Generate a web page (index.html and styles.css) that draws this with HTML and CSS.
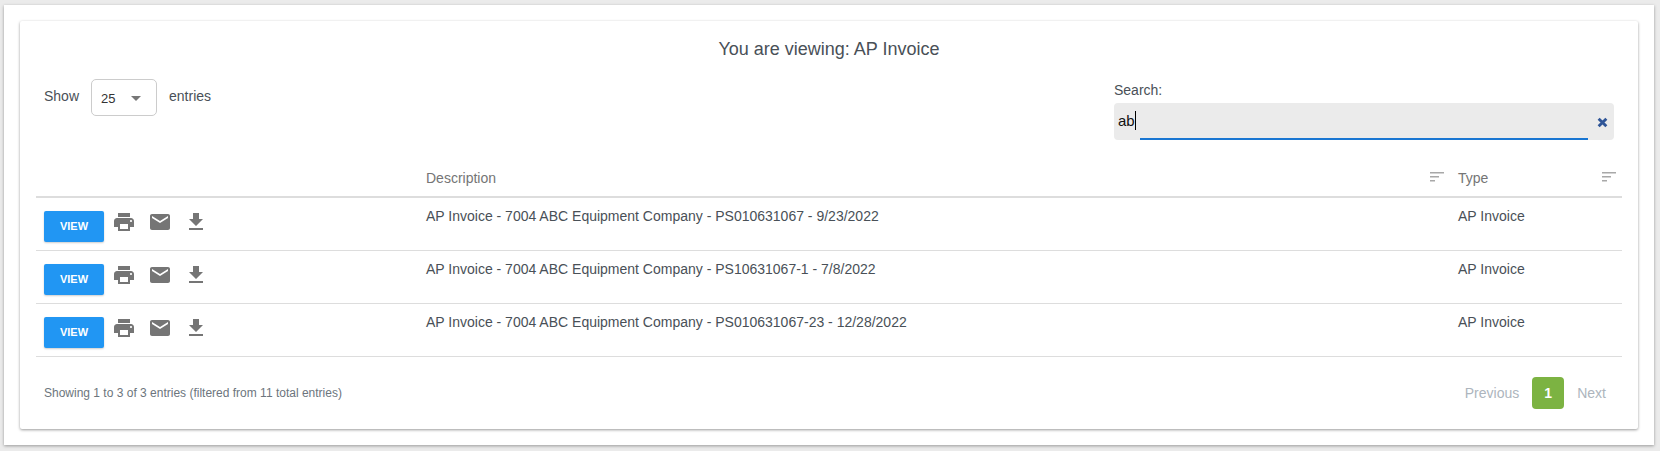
FILE: index.html
```html
<!DOCTYPE html>
<html lang="en">

<head>
    <meta charset="UTF-8">
    <meta name="viewport" content="width=device-width, initial-scale=1.0">
    <title>Documents</title>
    <link rel="stylesheet" href="styles.css">
</head>

<body>
    <div class="outer">
        <div class="card">
            <h1 class="title">You are viewing: AP Invoice</h1>

            <div class="controls">
                <div class="length">
                    <span>Show</span>
                    <div class="select"><span>25</span><i class="caret"></i></div>
                    <span>entries</span>
                </div>
                <div class="search">
                    <label>Search:</label>
                    <div class="search-box">
                        <span class="search-text">ab</span><span class="cursor"></span>
                        <svg class="clear" viewBox="0 0 10 10"><path d="M1.5 1.5l7 7M8.5 1.5l-7 7"/></svg>
                        <span class="underline"></span>
                    </div>
                </div>
            </div>

            <div class="table">
                <div class="row head">
                    <div class="col-actions"></div>
                    <div class="col-desc">
                        <span>Description</span>
                        <svg class="sort" viewBox="0 0 14 10"><path d="M0 0h14v1.6H0zM0 4h9v1.6H0zM0 8h5v1.6H0z"/></svg>
                    </div>
                    <div class="col-type">
                        <span>Type</span>
                        <svg class="sort" viewBox="0 0 14 10"><path d="M0 0h14v1.6H0zM0 4h9v1.6H0zM0 8h5v1.6H0z"/></svg>
                    </div>
                </div>

                <div class="row">
                    <div class="col-actions">
                        <button class="view">VIEW</button>
                        <svg class="icon" viewBox="0 0 24 24"><path d="M19 8H5c-1.66 0-3 1.34-3 3v6h4v4h12v-4h4v-6c0-1.66-1.34-3-3-3zm-3 11H8v-5h8v5zm3-7c-.55 0-1-.45-1-1s.45-1 1-1 1 .45 1 1-.45 1-1 1zm-1-9H6v4h12V3z"/></svg>
                        <svg class="icon" viewBox="0 0 24 24"><path d="M20 4H4c-1.1 0-2 .9-2 2v12c0 1.1.9 2 2 2h16c1.1 0 2-.9 2-2V6c0-1.1-.9-2-2-2zm0 4l-8 5-8-5V6l8 5 8-5v2z"/></svg>
                        <svg class="icon" viewBox="0 0 24 24"><path d="M19 9h-4V3H9v6H5l7 7 7-7zM5 18v2h14v-2H5z"/></svg>
                    </div>
                    <div class="col-desc">AP Invoice - 7004 ABC Equipment Company - PS010631067 - 9/23/2022</div>
                    <div class="col-type">AP Invoice</div>
                </div>

                <div class="row">
                    <div class="col-actions">
                        <button class="view">VIEW</button>
                        <svg class="icon" viewBox="0 0 24 24"><path d="M19 8H5c-1.66 0-3 1.34-3 3v6h4v4h12v-4h4v-6c0-1.66-1.34-3-3-3zm-3 11H8v-5h8v5zm3-7c-.55 0-1-.45-1-1s.45-1 1-1 1 .45 1 1-.45 1-1 1zm-1-9H6v4h12V3z"/></svg>
                        <svg class="icon" viewBox="0 0 24 24"><path d="M20 4H4c-1.1 0-2 .9-2 2v12c0 1.1.9 2 2 2h16c1.1 0 2-.9 2-2V6c0-1.1-.9-2-2-2zm0 4l-8 5-8-5V6l8 5 8-5v2z"/></svg>
                        <svg class="icon" viewBox="0 0 24 24"><path d="M19 9h-4V3H9v6H5l7 7 7-7zM5 18v2h14v-2H5z"/></svg>
                    </div>
                    <div class="col-desc">AP Invoice - 7004 ABC Equipment Company - PS10631067-1 - 7/8/2022</div>
                    <div class="col-type">AP Invoice</div>
                </div>

                <div class="row">
                    <div class="col-actions">
                        <button class="view">VIEW</button>
                        <svg class="icon" viewBox="0 0 24 24"><path d="M19 8H5c-1.66 0-3 1.34-3 3v6h4v4h12v-4h4v-6c0-1.66-1.34-3-3-3zm-3 11H8v-5h8v5zm3-7c-.55 0-1-.45-1-1s.45-1 1-1 1 .45 1 1-.45 1-1 1zm-1-9H6v4h12V3z"/></svg>
                        <svg class="icon" viewBox="0 0 24 24"><path d="M20 4H4c-1.1 0-2 .9-2 2v12c0 1.1.9 2 2 2h16c1.1 0 2-.9 2-2V6c0-1.1-.9-2-2-2zm0 4l-8 5-8-5V6l8 5 8-5v2z"/></svg>
                        <svg class="icon" viewBox="0 0 24 24"><path d="M19 9h-4V3H9v6H5l7 7 7-7zM5 18v2h14v-2H5z"/></svg>
                    </div>
                    <div class="col-desc">AP Invoice - 7004 ABC Equipment Company - PS010631067-23 - 12/28/2022</div>
                    <div class="col-type">AP Invoice</div>
                </div>
            </div>

            <div class="footer">
                <div class="info">Showing 1 to 3 of 3 entries (filtered from 11 total entries)</div>
                <div class="pager">
                    <span class="page-link">Previous</span>
                    <span class="page-num">1</span>
                    <span class="page-link">Next</span>
                </div>
            </div>
        </div>
    </div>
</body>

</html>
```

FILE: styles.css
```css
* {
    margin: 0;
    padding: 0;
    box-sizing: border-box;
}

body {
    height: 451px;
    padding: 5px 6px 6px 4px;
    background-color: #ebebeb;
    font-family: "Liberation Sans", Arial, sans-serif;
    font-size: 14px;
    color: #495057;
    overflow: hidden;
}

.outer {
    height: 440px;
    padding: 16px;
    background-color: #fff;
    box-shadow: 0 1px 3px rgba(0, 0, 0, .35);
}

.card {
    height: 408px;
    padding: 0 16px;
    background-color: #fff;
    border-radius: 2px;
    box-shadow: 0 1px 3px rgba(0, 0, 0, .4);
}

.title {
    padding-top: 18px;
    height: 54px;
    font-size: 18px;
    line-height: 20px;
    font-weight: 400;
    text-align: center;
}

.controls {
    display: flex;
    justify-content: space-between;
    height: 87px;
    padding: 0 8px;
}

.length {
    display: flex;
    align-items: center;
    gap: 12px;
    height: 36px;
    margin-top: 3px;
}

.select {
    display: flex;
    justify-content: space-between;
    align-items: center;
    width: 66px;
    height: 37px;
    margin-top: 2px;
    padding: 2px 15px 0 9px;
    border: 1px solid #ccc;
    border-radius: 5px;
    color: #333;
    font-size: 13px;
}

.caret {
    border-left: 5px solid transparent;
    border-right: 5px solid transparent;
    border-top: 5px solid #777;
}

.search {
    width: 500px;
    padding-top: 7px;
}

.search label {
    display: block;
    height: 21px;
    line-height: 16px;
}

.search-box {
    position: relative;
    display: flex;
    align-items: center;
    width: 100%;
    height: 37px;
    padding: 0 0 2px 4px;
    background-color: #ebebeb;
    border-radius: 4px;
    color: #111;
    font-size: 15px;
}

.cursor {
    width: 1px;
    height: 19px;
    background-color: #000;
}

.clear {
    position: absolute;
    right: 6px;
    top: 14px;
    width: 11px;
    height: 11px;
    fill: none;
    stroke: #2f5597;
    stroke-width: 2.6;
}

.underline {
    position: absolute;
    left: 26px;
    bottom: 0;
    width: 448px;
    height: 2px;
    background-color: #1976d2;
}

.row {
    display: flex;
    height: 53px;
    border-bottom: 1px solid #ddd;
}

.head {
    height: 36px;
    border-bottom: 2px solid #ddd;
    color: #757575;
}

.col-actions {
    display: flex;
    align-items: flex-start;
    width: 390px;
    padding: 13px 8px 0;
}

.col-desc,
.col-type {
    position: relative;
    padding-top: 10px;
    line-height: 16px;
}

.col-desc {
    width: 1032px;
}

.col-type {
    width: 164px;
}

.head .col-desc,
.head .col-type {
    padding-top: 8px;
}

.sort {
    position: absolute;
    top: 10px;
    right: 14px;
    width: 14px;
    height: 10px;
    fill: #a8a8a8;
}

.col-type .sort {
    right: 6px;
}

.view {
    width: 60px;
    height: 31px;
    margin-right: 8px;
    padding-bottom: 2px;
    border: none;
    border-radius: 2px;
    background-color: #2196f3;
    box-shadow: 0 1px 2px rgba(0, 0, 0, .2);
    color: #fff;
    font-family: inherit;
    font-size: 11px;
    font-weight: 700;
}

.icon {
    width: 24px;
    height: 24px;
    margin-right: 12px;
    margin-top: -1px;
    fill: #757575;
}

.footer {
    display: flex;
    justify-content: space-between;
    align-items: center;
    height: 72px;
    padding: 0 8px;
}

.info {
    font-size: 12px;
    color: #6c757d;
}

.pager {
    display: flex;
    align-items: center;
    gap: 13px;
    padding-right: 8px;
    color: #adb5bd;
}

.page-num {
    width: 32px;
    height: 32px;
    line-height: 32px;
    text-align: center;
    border-radius: 4px;
    background-color: #7cb342;
    color: #fff;
    font-weight: 700;
}
```
